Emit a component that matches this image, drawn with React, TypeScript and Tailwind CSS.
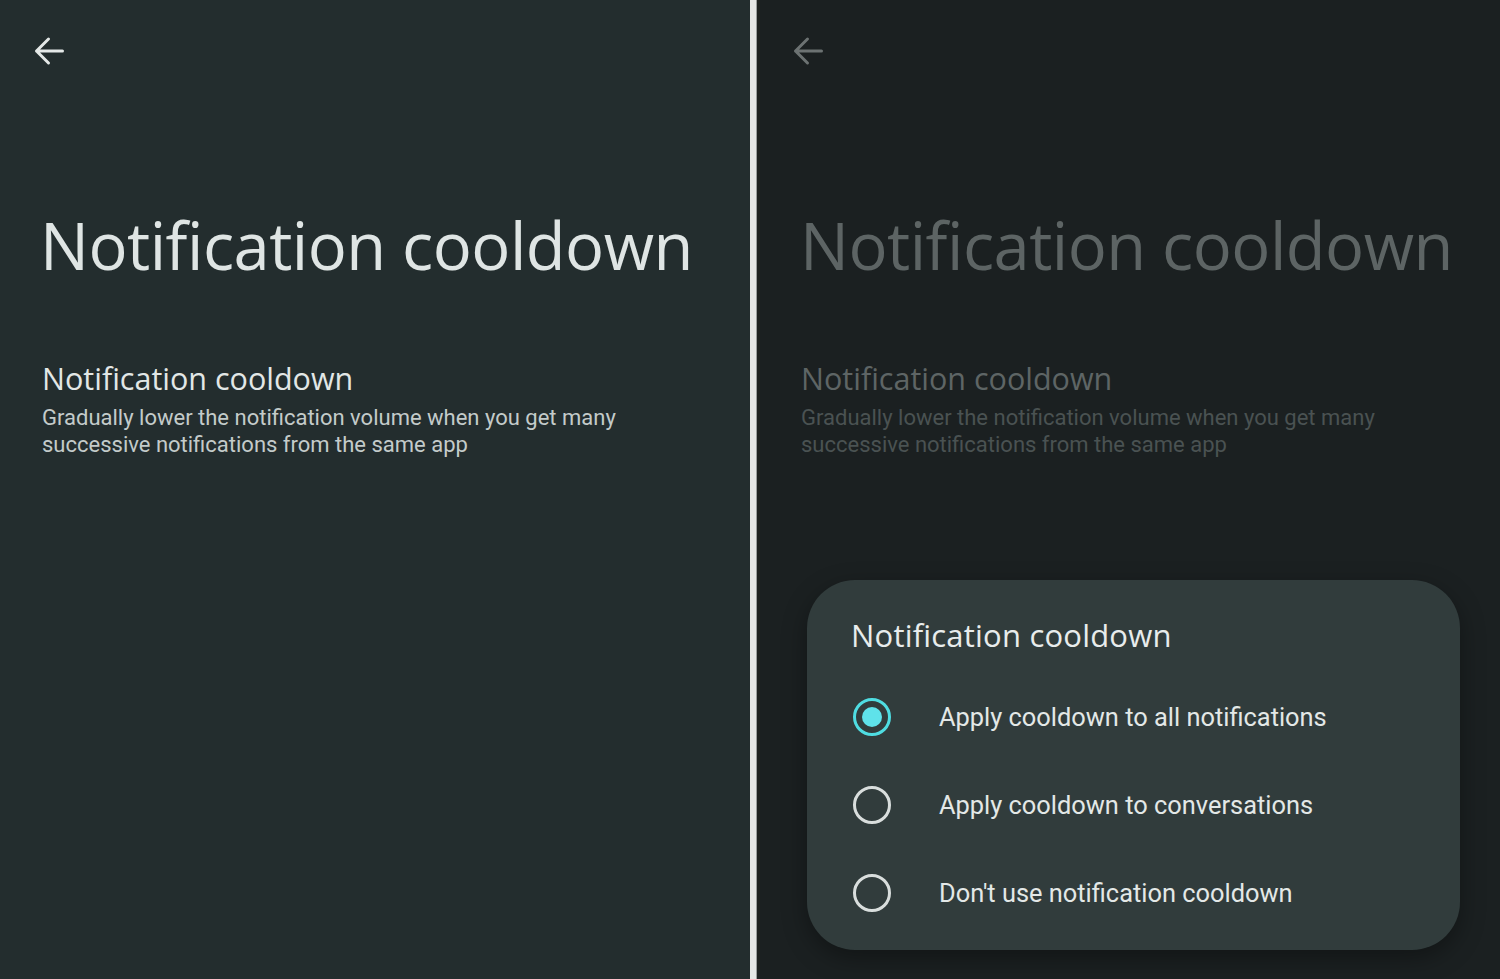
import React from "react";

function BackArrow({ color }: { color: string }) {
  return (
    <svg width="30" height="30" viewBox="0 0 30 30" fill="none">
      <path d="M28.5 15H2.5M14.5 3L2.5 15l12 12" stroke={color} strokeWidth="3" strokeLinecap="round" strokeLinejoin="round" />
    </svg>
  );
}

function Radio({ checked }: { checked: boolean }) {
  if (checked) {
    return (
      <div className="w-[38px] h-[38px] rounded-full border-[3.5px] border-[#4fdde2] flex items-center justify-center">
        <div className="w-[20px] h-[20px] rounded-full bg-[#5fe2ea]" />
      </div>
    );
  }
  return <div className="w-[38px] h-[38px] rounded-full border-[3px] border-[#d9dedd]" />;
}

export default function App() {
  const heading = { fontFamily: '"Open Sans", "Noto Sans", sans-serif' };
  const body = { fontFamily: 'Roboto, "Noto Sans", sans-serif' };
  const options = [
    { label: "Apply cooldown to all notifications", checked: true },
    { label: "Apply cooldown to conversations", checked: false },
    { label: "Don't use notification cooldown", checked: false },
  ];
  return (
    <div className="w-[1500px] h-[979px] flex overflow-hidden">
      <div className="w-[750px] h-full bg-[#232d2e] flex flex-col">
        <div className="pl-[34px] pt-[36px]">
          <BackArrow color="#e4e8e7" />
        </div>
        <h1 style={heading} className="ml-[40px] mt-[137px] text-[65px] leading-[84px] tracking-[-0.5px] text-[#dfe5e4]">
          Notification cooldown
        </h1>
        <div className="ml-[42px] mt-[71px]">
          <div style={heading} className="text-[30.5px] leading-[40px] text-[#e2e7e6]">Notification cooldown</div>
          <div style={body} className="mt-[6px] text-[22px] leading-[27px] text-[#c3cbca] w-[620px]">
            Gradually lower the notification volume when you get many successive notifications from the same app
          </div>
        </div>
      </div>
      <div className="w-[7px] h-full bg-[#e4e6e6] border-r border-[#9a9e9e]" />
      <div className="flex-1 h-full bg-[#1b2021] flex flex-col">
        <div className="pl-[36px] pt-[36px]">
          <BackArrow color="#6c7272" />
        </div>
        <h1 style={heading} className="ml-[43px] mt-[137px] text-[65px] leading-[84px] tracking-[-0.5px] text-[#5d6464]">
          Notification cooldown
        </h1>
        <div className="ml-[44px] mt-[71px]">
          <div style={heading} className="text-[30.5px] leading-[40px] text-[#5e6565]">Notification cooldown</div>
          <div style={body} className="mt-[6px] text-[22px] leading-[27px] text-[#4a5252] w-[620px]">
            Gradually lower the notification volume when you get many successive notifications from the same app
          </div>
        </div>
        <div className="ml-[50px] mt-[122px] w-[653px] h-[370px] rounded-[48px] bg-[#313c3c] pl-[44px] pt-[35px] shadow-[0_8px_24px_rgba(0,0,0,0.35)]">
          <div style={heading} className="text-[31px] leading-[40px] font-medium tracking-[0.2px] text-[#e8ecec]">Notification cooldown</div>
          <div className="mt-[18px] flex flex-col">
            {options.map((o) => (
              <div key={o.label} className="h-[88px] flex items-center pl-[2px]">
                <Radio checked={o.checked} />
                <span style={body} className="ml-[48px] text-[25.4px] text-[#e3e8e7]">{o.label}</span>
              </div>
            ))}
          </div>
        </div>
      </div>
    </div>
  );
}
